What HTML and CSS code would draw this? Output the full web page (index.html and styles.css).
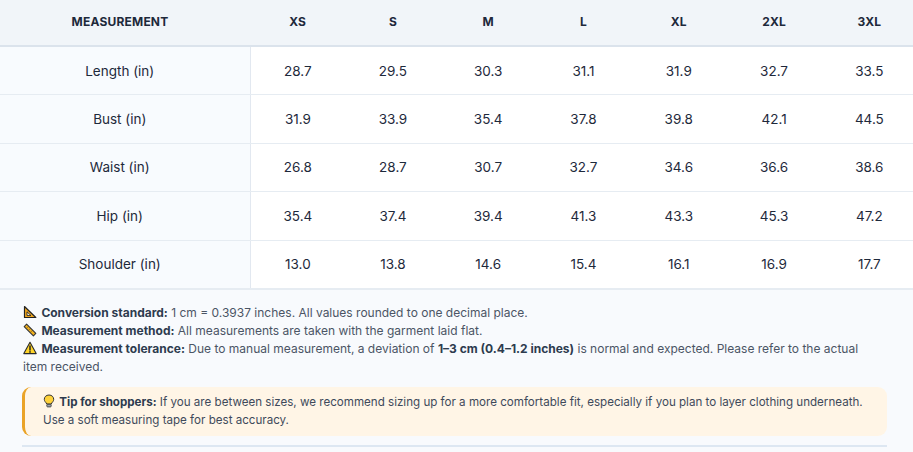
FILE: index.html
```html
<!DOCTYPE html>
<html lang="en">
<head>
<meta charset="utf-8">
<title>Size Chart</title>
<link rel="stylesheet" href="styles.css">
</head>
<body>
<div class="chart">
  <table class="sizes">
    <thead>
      <tr>
        <th class="label-col">MEASUREMENT</th>
        <th>XS</th><th>S</th><th>M</th><th>L</th><th>XL</th><th>2XL</th><th>3XL</th>
      </tr>
    </thead>
    <tbody>
      <tr><td class="label-col">Length (in)</td><td>28.7</td><td>29.5</td><td>30.3</td><td>31.1</td><td>31.9</td><td>32.7</td><td>33.5</td></tr>
      <tr><td class="label-col">Bust (in)</td><td>31.9</td><td>33.9</td><td>35.4</td><td>37.8</td><td>39.8</td><td>42.1</td><td>44.5</td></tr>
      <tr><td class="label-col">Waist (in)</td><td>26.8</td><td>28.7</td><td>30.7</td><td>32.7</td><td>34.6</td><td>36.6</td><td>38.6</td></tr>
      <tr><td class="label-col">Hip (in)</td><td>35.4</td><td>37.4</td><td>39.4</td><td>41.3</td><td>43.3</td><td>45.3</td><td>47.2</td></tr>
      <tr><td class="label-col">Shoulder (in)</td><td>13.0</td><td>13.8</td><td>14.6</td><td>15.4</td><td>16.1</td><td>16.9</td><td>17.7</td></tr>
    </tbody>
  </table>

  <div class="notes">
    <div class="note-list">
      <p class="note">
        <svg class="ico" viewBox="0 0 14 14" aria-hidden="true"><path d="M1.5 1.5 L12.8 12.5 L1.5 12.5 Z" fill="#f4a81c" stroke="#222" stroke-width="1.2" stroke-linejoin="round"/><path d="M4 6.8 L8 10.6 L4 10.6 Z" fill="#fff3d0" stroke="#222" stroke-width="0.9"/></svg>
        <b>Conversion standard:</b> 1 cm = 0.3937 inches. All values rounded to one decimal place.
      </p>
      <p class="note">
        <svg class="ico" viewBox="0 0 14 14" aria-hidden="true"><path d="M1.2 3.6 L3.6 1.2 L12.8 10.4 L10.4 12.8 Z" fill="#f4b21c" stroke="#333" stroke-width="1.1" stroke-linejoin="round"/><path d="M4.2 4.6 L5.2 3.6 M6.2 6.6 L7.2 5.6 M8.2 8.6 L9.2 7.6" stroke="#333" stroke-width="0.8"/></svg>
        <b>Measurement method:</b> All measurements are taken with the garment laid flat.
      </p>
      <p class="note">
        <svg class="ico" viewBox="0 0 14 14" aria-hidden="true"><path d="M7 1.3 L13.2 12.6 L0.8 12.6 Z" fill="#ffd428" stroke="#2a2a2a" stroke-width="1.1" stroke-linejoin="round"/><path d="M7 5 L7 9" stroke="#222" stroke-width="1.5" stroke-linecap="round"/><circle cx="7" cy="10.9" r="0.85" fill="#222"/></svg>
        <b>Measurement tolerance:</b> Due to manual measurement, a deviation of <b>1–3 cm (0.4–1.2 inches)</b> is normal and expected. Please refer to the actual item received.
      </p>
    </div>
    <div class="tip">
      <svg class="ico bulb" viewBox="0 0 12 14" aria-hidden="true"><path d="M6 1 C3.1 1 1.3 3 1.3 5.3 C1.3 7 2.4 8 3.3 9 L3.6 10 L8.4 10 L8.7 9 C9.6 8 10.7 7 10.7 5.3 C10.7 3 8.9 1 6 1 Z" fill="#ffd23a" stroke="#333" stroke-width="1"/><rect x="3.8" y="10.3" width="4.4" height="2.6" rx="0.8" fill="#9aa3ad" stroke="#333" stroke-width="0.8"/></svg>
      <b>Tip for shoppers:</b> If you are between sizes, we recommend sizing up for a more comfortable fit, especially if you plan to layer clothing underneath. Use a soft measuring tape for best accuracy.
    </div>
    <div class="rule"></div>
  </div>
</div>
</body>
</html>
```
FILE: styles.css
```css
* { box-sizing: border-box; }
html, body { margin: 0; padding: 0; background: #ffffff; overflow: hidden; }
body {
  font-family: Inter, "Noto Sans", "Liberation Sans", sans-serif;
  color: #1e293b;
}
.chart { width: 917px; }
.sizes {
  width: 100%;
  border-collapse: collapse;
  table-layout: fixed;
}
.sizes th {
  background: #f1f5f9;
  height: 46px;
  padding: 0 0 2px;
  font-size: 12px;
  font-weight: 700;
  letter-spacing: 0.2px;
  color: #1e293b;
  text-align: center;
  border-bottom: 2px solid #dbe3ec;
}
.sizes th.label-col { width: 250px; padding-right: 10px; }
.sizes td {
  height: 48.5px;
  padding: 0;
  font-size: 13.5px;
  text-align: center;
  color: #1e293b;
  border-bottom: 1px solid #e6ecf2;
}
.sizes td.label-col {
  background: #f8fbfe;
  border-right: 1px solid #e2e8f0;
  padding-right: 10px;
}
.notes {
  background: #f8fafd;
  border-top: 1px solid #e6ecf2;
  padding: 14px 30px 0 22px;
  height: 163px;
}
.note-list { padding-right: 12px; }
.note {
  margin: 0;
  font-size: 12px;
  line-height: 18px;
  color: #4b5565;
  padding-left: 1px;
}
.note b { color: #2d3b4e; font-weight: 700; }
.ico {
  width: 14px;
  height: 14px;
  vertical-align: -2px;
  margin-right: 1px;
}
.tip {
  margin-top: 11px;
  background: #fff5e6;
  border-left: 3px solid #eaa327;
  border-radius: 9px;
  padding: 7px 18px 7px 18px;
  font-size: 11.6px;
  line-height: 17.5px;
  color: #3e4a5b;
}
.tip b { color: #2d3b4e; }
.bulb { width: 12px; }
.rule {
  margin-top: 9px;
  height: 2px;
  background: #dde7f2;
}
```
